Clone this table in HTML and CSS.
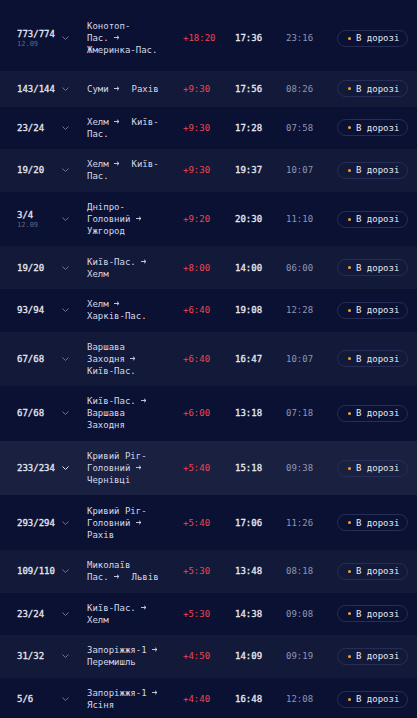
FILE: index.html
```html
<!DOCTYPE html>
<html lang="uk">
  <head>
    <meta charset="UTF-8" />
    <meta name="viewport" content="width=device-width, initial-scale=1.0" />
    <title>Затримки поїздів</title>
    <link rel="stylesheet" href="styles.css">
  </head>
  <body>
    <div id="train-list" class="list"></div>
    <script>
      const trains = [
        ["773/774", "12.09", "Конотоп-Пас.", "Жмеринка-Пас.", "+18:20", "17:36", "23:16"],
        ["143/144", "", "Суми", "Рахів", "+9:30", "17:56", "08:26"],
        ["23/24", "", "Хелм", "Київ-Пас.", "+9:30", "17:28", "07:58"],
        ["19/20", "", "Хелм", "Київ-Пас.", "+9:30", "19:37", "10:07"],
        ["3/4", "12.09", "Дніпро-Головний", "Ужгород", "+9:20", "20:30", "11:10"],
        ["19/20", "", "Київ-Пас.", "Хелм", "+8:00", "14:00", "06:00"],
        ["93/94", "", "Хелм", "Харків-Пас.", "+6:40", "19:08", "12:28"],
        ["67/68", "", "Варшава Заходня", "Київ-Пас.", "+6:40", "16:47", "10:07"],
        ["67/68", "", "Київ-Пас.", "Варшава Заходня", "+6:00", "13:18", "07:18"],
        ["233/234", "", "Кривий Ріг-Головний", "Чернівці", "+5:40", "15:18", "09:38"],
        ["293/294", "", "Кривий Ріг-Головний", "Рахів", "+5:40", "17:06", "11:26"],
        ["109/110", "", "Миколаїв Пас.", "Львів", "+5:30", "13:48", "08:18"],
        ["23/24", "", "Київ-Пас.", "Хелм", "+5:30", "14:38", "09:08"],
        ["31/32", "", "Запоріжжя-1", "Перемишль", "+4:50", "14:09", "09:19"],
        ["5/6", "", "Запоріжжя-1", "Ясіня", "+4:40", "16:48", "12:08"]
      ];
      const hovered = 9;
      const arrow = `<svg class="arr" width="6" height="5" viewBox="0 0 6 5"><path d="M0 2.5 H5 M3 0.7 L5 2.5 L3 4.3" fill="none" stroke="currentColor" stroke-width="0.9"/></svg>`;

      // keep the last word of the origin on the same line as the arrow
      function route(from, to) {
        const m = from.match(/^(.*[\s-])?([^\s-]+)$/);
        const head = m[1] || "";
        return `${head}<span class="nw">${m[2]} ${arrow}</span> ${to}`;
      }

      let str = "";
      for (let i = 0; i < trains.length; i += 1) {
        const t = trains[i];
        let cls = "row";
        if (i == 0) cls += " first";
        if (i == hovered) cls += " hover";
        str += `<div class="${cls}">
            <div class="num">${t[0]}${t[1] ? `<span class="date">${t[1]}</span>` : ""}</div>
            <div class="chev"><svg width="7" height="4" viewBox="0 0 7 4"><path d="M0.5 0.5 L3.5 3.5 L6.5 0.5" fill="none" stroke="currentColor" stroke-width="1"/></svg></div>
            <div class="route">${route(t[2], t[3])}</div>
            <div class="delay">${t[4]}</div>
            <div class="dep">${t[5]}</div>
            <div class="arrive">${t[6]}</div>
            <div class="status"><span class="badge"><span class="dot"></span>В дорозі</span></div>
          </div>`;
      }
      document.getElementById("train-list").innerHTML = str;
    </script>
  </body>
</html>
```
FILE: styles.css
```css
body {
  margin: 0;
  background-color: #0b1132;
  font-family: "DejaVu Sans Mono", "Liberation Mono", monospace;
  font-size: 9px;
  color: #d6daea;
}
.row {
  display: grid;
  grid-template-columns: 62px 25px 96px 52px 51px 51px 71px;
  align-items: center;
  padding: 9.3px 0;
  line-height: 12px;
  background-color: #0b1132;
}
.row:nth-child(even) {
  background-color: #131938;
}
.row.first {
  padding: 20px 0 15px;
}
.row.hover {
  background-color: #1a2040;
}
.num {
  padding-left: 17px;
  color: #e4e7f1;
  -webkit-text-stroke: 0.3px #e4e7f1;
}
.date {
  display: block;
  font-size: 7px;
  line-height: 8px;
  color: #5f6688;
  -webkit-text-stroke: 0;
}
.chev {
  display: flex;
  color: #6c7396;
}
.row.hover .chev {
  color: #e4e7f2;
}
.route {
  width: 77px;
  color: #d4d8e8;
}
.nw {
  white-space: nowrap;
}
.arr {
  margin-right: 6px;
  vertical-align: 1px;
}
.delay {
  color: #ee4552;
}
.dep {
  color: #e6e9f2;
  -webkit-text-stroke: 0.3px #e6e9f2;
}
.arrive {
  color: #9096b2;
}
.badge {
  display: flex;
  align-items: center;
  box-sizing: border-box;
  height: 17px;
  width: 71px;
  padding-left: 10px;
  border: 1px solid #262e55;
  border-radius: 9px;
  color: #e6e9f3;
}
.dot {
  width: 3px;
  height: 3px;
  margin-right: 5px;
  border-radius: 50%;
  background-color: #f2a23a;
}
```
